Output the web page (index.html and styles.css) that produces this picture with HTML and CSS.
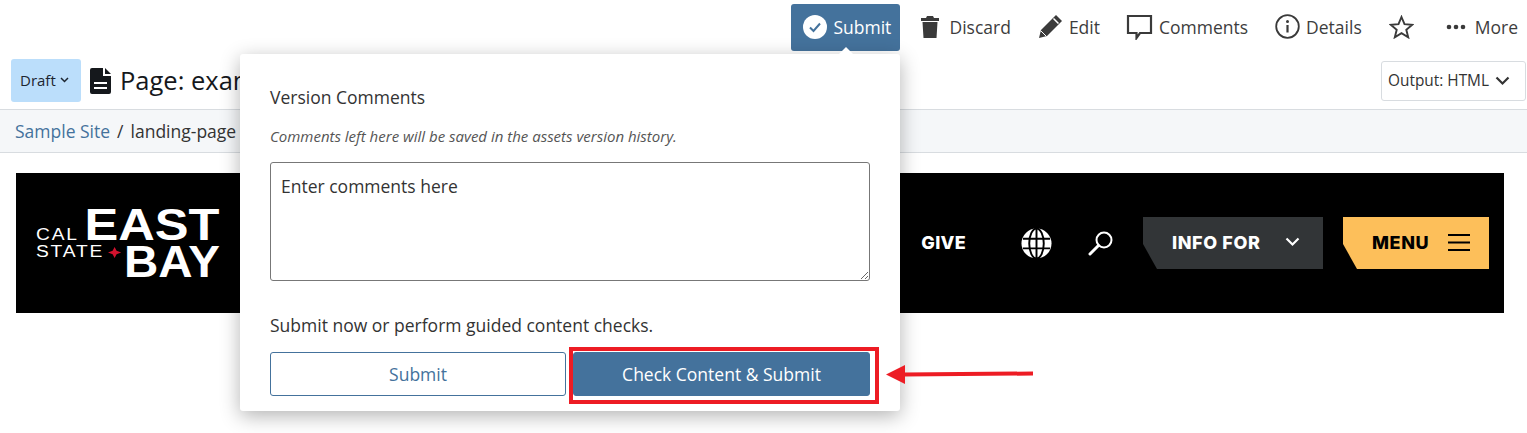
FILE: index.html
```html
<!DOCTYPE html>
<html lang="en">
<head>
    <meta charset="UTF-8">
    <meta name="viewport" content="width=device-width, initial-scale=1.0">
    <title>Page: example</title>
    <link rel="stylesheet" href="styles.css">
</head>
<body>
    <div class="toolbar">
        <button class="tool tool-active">
            <svg class="tool-icon" width="26" height="26" viewBox="0 0 26 26"><circle cx="13" cy="13" r="12" fill="#fff"/><path d="M8 13.500l3.500 3.500 6.500-7.500" fill="none" stroke="#44729c" stroke-width="2"/></svg>
            Submit
        </button>
        <button class="tool tool-discard">
            <svg class="tool-icon" width="20" height="24" viewBox="0 0 20 24"><path d="M7 1h6l1 2h5v3H1V3h5zM2.500 7h15l-1 16H3.500z" fill="#3a3a3a"/></svg>
            Discard
        </button>
        <button class="tool tool-edit">
            <svg class="tool-icon" width="25" height="25" viewBox="0 0 25 25"><path d="M18 1l6 6L9 22l-8 2 2-8z" fill="#3a3a3a"/><path d="M15.500 4.500l5 5" stroke="#fff" stroke-width="1.500"/><path d="M3 17l5 5" stroke="#fff" stroke-width="1"/></svg>
            Edit
        </button>
        <button class="tool tool-comments">
            <svg class="tool-icon" width="27" height="26" viewBox="0 0 27 26"><path d="M2 2h23v17H14l-3.500 5V19H2z" fill="none" stroke="#3a3a3a" stroke-width="2.200"/></svg>
            Comments
        </button>
        <button class="tool tool-details">
            <svg class="tool-icon" width="25" height="25" viewBox="0 0 25 25"><circle cx="12.500" cy="12.500" r="11.300" fill="none" stroke="#3a3a3a" stroke-width="1.800"/><circle cx="12.500" cy="7.500" r="1.500" fill="#3a3a3a"/><path d="M12.500 11v7.500" stroke="#3a3a3a" stroke-width="2.200"/></svg>
            Details
        </button>
        <button class="tool tool-star">
            <svg width="25" height="24" viewBox="0 0 25 24"><path d="M12.500 2l3 7.200 7.700.6-5.900 5 1.900 7.500-6.700-4.100-6.700 4.100 1.900-7.500-5.900-5 7.700-.6z" fill="none" stroke="#3a3a3a" stroke-width="1.900"/></svg>
        </button>
        <button class="tool tool-more">
            <svg class="tool-icon" width="20" height="6" viewBox="0 0 20 6"><circle cx="3" cy="3" r="2.300" fill="#3a3a3a"/><circle cx="10" cy="3" r="2.300" fill="#3a3a3a"/><circle cx="17" cy="3" r="2.300" fill="#3a3a3a"/></svg>
            More
        </button>
    </div>

    <div class="title-row">
        <button class="draft">Draft
            <svg width="9" height="6" viewBox="0 0 9 6"><path d="M1 1l3.500 3.500L8 1" fill="none" stroke="#1c2530" stroke-width="1.500"/></svg>
        </button>
        <svg class="file-icon" width="21" height="26" viewBox="0 0 21 26"><path d="M2 0h11v8h8v16a2 2 0 0 1-2 2H2a2 2 0 0 1-2-2V2a2 2 0 0 1 2-2z" fill="#15181c"/><path d="M15 0l6 6h-6z" fill="#15181c"/><path d="M4 14h13v2H4zM4 19h13v2H4z" fill="#fff"/></svg>
        <h1 class="page-title">Page: example</h1>
        <button class="output">Output: HTML
            <svg width="15" height="10" viewBox="0 0 15 10"><path d="M1.500 1.500l6 6 6-6" fill="none" stroke="#333" stroke-width="2.200"/></svg>
        </button>
    </div>

    <div class="crumbs">
        <a class="crumb-link">Sample Site</a>
        <span class="crumb-sep">/</span>
        <span>landing-page</span>
    </div>

    <div class="content">
        <div class="banner">
            <div class="logo">
                <div class="logo-row logo-row-top">
                    <span class="logo-small">CAL</span>
                    <span class="logo-big logo-east">EAST</span>
                </div>
                <div class="logo-row">
                    <span class="logo-small">STATE<svg class="logo-star" width="11" height="13" viewBox="0 0 12 12"><path d="M6 0l1.800 4.200L12 6 7.800 7.800 6 12 4.200 7.800 0 6l4.200-1.800z" fill="#d2122e"/></svg></span>
                    <span class="logo-big logo-bay">BAY</span>
                </div>
            </div>
            <div class="banner-nav">
                <span class="give">GIVE</span>
                <svg class="globe" width="31" height="31" viewBox="0 0 32 32"><circle cx="16" cy="16" r="15.500" fill="#fff"/><g fill="none" stroke="#000" stroke-width="2"><ellipse cx="16" cy="16" rx="7.500" ry="15.500"/><path d="M16 1v30M2 11h28M2 21h28"/></g></svg>
                <svg class="search" width="26" height="26" viewBox="0 0 26 26"><circle cx="16" cy="10" r="7.500" fill="none" stroke="#fff" stroke-width="2"/><path d="M10.500 15.500L2 24" stroke="#fff" stroke-width="3" stroke-linecap="round"/></svg>
                <div class="nav-tag nav-info">INFO FOR
                    <svg width="15" height="10" viewBox="0 0 15 10"><path d="M1.500 1.500l6 6 6-6" fill="none" stroke="#fff" stroke-width="2.200"/></svg>
                </div>
                <div class="nav-tag nav-menu">MENU
                    <svg width="23" height="19" viewBox="0 0 23 19"><path d="M1 2h22M1 9.500h22M1 17h22" stroke="#000" stroke-width="2.200"/></svg>
                </div>
            </div>
        </div>
    </div>

    <div class="popover">
        <span class="popover-caret"></span>
        <label class="popover-label">Version Comments</label>
        <p class="popover-hint">Comments left here will be saved in the assets version history.</p>
        <textarea class="popover-input" placeholder="Enter comments here"></textarea>
        <p class="popover-note">Submit now or perform guided content checks.</p>
        <div class="popover-actions">
            <button class="btn btn-outline">Submit</button>
            <button class="btn btn-solid">Check Content &amp; Submit</button>
        </div>
    </div>

    <div class="highlight-box"></div>
    <svg class="highlight-arrow" width="148" height="24" viewBox="0 0 148 24"><path d="M18 12.500L147 11.500" stroke="#ed1c24" stroke-width="4"/><path d="M0 12.500L19 3v19z" fill="#ed1c24"/></svg>
</body>
</html>
```

FILE: styles.css
```css
* {
box-sizing: border-box;
}

body {
margin: 0;
height: 433px;
overflow: hidden;
font-family: "Open Sans", sans-serif;
color: #333;
background-color: #fff;
position: relative;
}

button {
font-family: inherit;
cursor: pointer;
}

.toolbar {
display: flex;
justify-content: flex-end;
align-items: flex-start;
height: 54px;
padding: 4px 9px 0 0;
}

.tool {
display: flex;
align-items: center;
height: 47px;
padding: 0 0 2px;
border: 0;
border-radius: 3px;
background: none;
font-size: 17.500px;
color: #3d3d3d;
}

.tool-icon {
margin-right: 6px;
}

.tool-active {
width: 109px;
padding-left: 11px;
background-color: #44729c;
color: #fff;
}

.tool-active .tool-icon {
margin-right: 5px;
}

.tool-discard {
margin-left: 20px;
}

.tool-discard .tool-icon {
margin-right: 9px;
}

.tool-edit {
margin-left: 27px;
}

.tool-comments {
margin-left: 26px;
}

.tool-details {
margin-left: 27px;
}

.tool-star {
margin-left: 27px;
}

.tool-more {
margin-left: 32px;
}

.tool-more .tool-icon {
margin-right: 9px;
}

.title-row {
display: flex;
align-items: center;
height: 56px;
padding: 5px 1px 7px 11px;
border-bottom: 1px solid #d8dce0;
}

.draft {
display: flex;
align-items: center;
gap: 4px;
width: 70px;
height: 43px;
padding: 0 0 2px 9px;
border: 0;
border-radius: 3px;
background-color: #bbdefb;
font-size: 15px;
color: #1c2530;
}

.file-icon {
margin-left: 9px;
}

.page-title {
margin: 0 0 2px 9px;
font-size: 25.500px;
font-weight: 400;
color: #15181c;
}

.output {
display: flex;
align-items: center;
gap: 6px;
margin-left: auto;
width: 145px;
height: 40px;
padding: 0 0 0 6px;
border: 1px solid #d8dce0;
border-radius: 3px;
background-color: #fff;
font-size: 15.400px;
color: #333;
}

.crumbs {
display: flex;
gap: 7px;
align-items: center;
height: 43px;
padding-left: 15px;
background-color: #f5f7f9;
border-bottom: 1px solid #d8dce0;
font-size: 17.500px;
color: #333;
}

.crumb-link {
color: #44729c;
}

.content {
padding: 20px 23px 0 16px;
}

.banner {
display: flex;
justify-content: space-between;
align-items: center;
height: 140px;
background-color: #000;
}

.logo {
display: flex;
flex-direction: column;
gap: 5px;
width: 184px;
margin-left: 20px;
color: #fff;
font-family: "Liberation Sans", sans-serif;
}

.logo-row {
display: flex;
justify-content: space-between;
align-items: flex-start;
}

.logo-row-top {
align-items: flex-end;
}

.logo-small {
display: inline-flex;
align-items: center;
font-size: 16px;
line-height: 12px;
letter-spacing: 1.500px;
transform: scaleX(1.200);
transform-origin: left;
}

.logo-star {
margin-left: 3px;
}

.logo-big {
font-size: 44px;
font-weight: 700;
line-height: 32px;
transform-origin: right;
}

.logo-east {
transform: scaleX(1.150);
margin-right: 1px;
}

.logo-bay {
transform: scaleX(1.080);
}

.banner-nav {
display: flex;
align-items: center;
margin-right: 15px;
color: #fff;
font-family: "Inter", sans-serif;
font-weight: 800;
}

.give {
font-size: 18px;
letter-spacing: 0.300px;
padding-bottom: 2px;
}

.globe {
margin-left: 55px;
}

.search {
margin-left: 36px;
}

.nav-tag {
display: flex;
align-items: center;
justify-content: space-between;
height: 52px;
padding-bottom: 2px;
font-size: 18px;
letter-spacing: 0.600px;
clip-path: polygon(0 0, 100% 0, 100% 100%, 14px 100%, 0 27px);
}

.nav-info {
width: 180px;
margin-left: 29px;
padding: 0 23px 2px 29px;
background-color: #323537;
}

.nav-menu {
width: 146px;
margin-left: 20px;
padding: 0 19px 2px 29px;
background-color: #fdbf5a;
color: #000;
}

.popover {
position: absolute;
left: 240px;
top: 54px;
width: 660px;
height: 357px;
padding: 31px 30px 0;
background-color: #fff;
border-radius: 3px;
box-shadow: 0 5px 20px rgba(0, 0, 0, 0.3);
}

.popover-caret {
position: absolute;
top: -7px;
left: 595px;
width: 0;
height: 0;
border-left: 11px solid transparent;
border-right: 11px solid transparent;
border-bottom: 11px solid #fff;
}

.popover-label {
display: block;
font-size: 17.500px;
line-height: 24px;
}

.popover-hint {
margin: 17px 0 0;
font-size: 15px;
line-height: 20px;
font-style: italic;
color: #555;
}

.popover-input {
display: block;
width: 600px;
height: 119px;
margin-top: 16px;
padding: 11px 10px;
border: 1px solid #777;
border-radius: 3px;
font-family: inherit;
font-size: 17.500px;
}

.popover-input::placeholder {
color: #333;
opacity: 1;
}

.popover-note {
margin: 32px 0 0;
font-size: 17.500px;
line-height: 24px;
}

.popover-actions {
display: flex;
gap: 7px;
margin-top: 15px;
}

.btn {
width: 296px;
height: 44px;
border: 1px solid #44729c;
border-radius: 3px;
font-size: 17.500px;
}

.btn-outline {
background-color: #fff;
color: #44729c;
}

.btn-solid {
width: 297px;
background-color: #44729c;
color: #fff;
}

.highlight-box {
position: absolute;
left: 569px;
top: 347px;
width: 310px;
height: 57px;
border: 4px solid #ed1c24;
}

.highlight-arrow {
position: absolute;
left: 886px;
top: 362px;
}
```
